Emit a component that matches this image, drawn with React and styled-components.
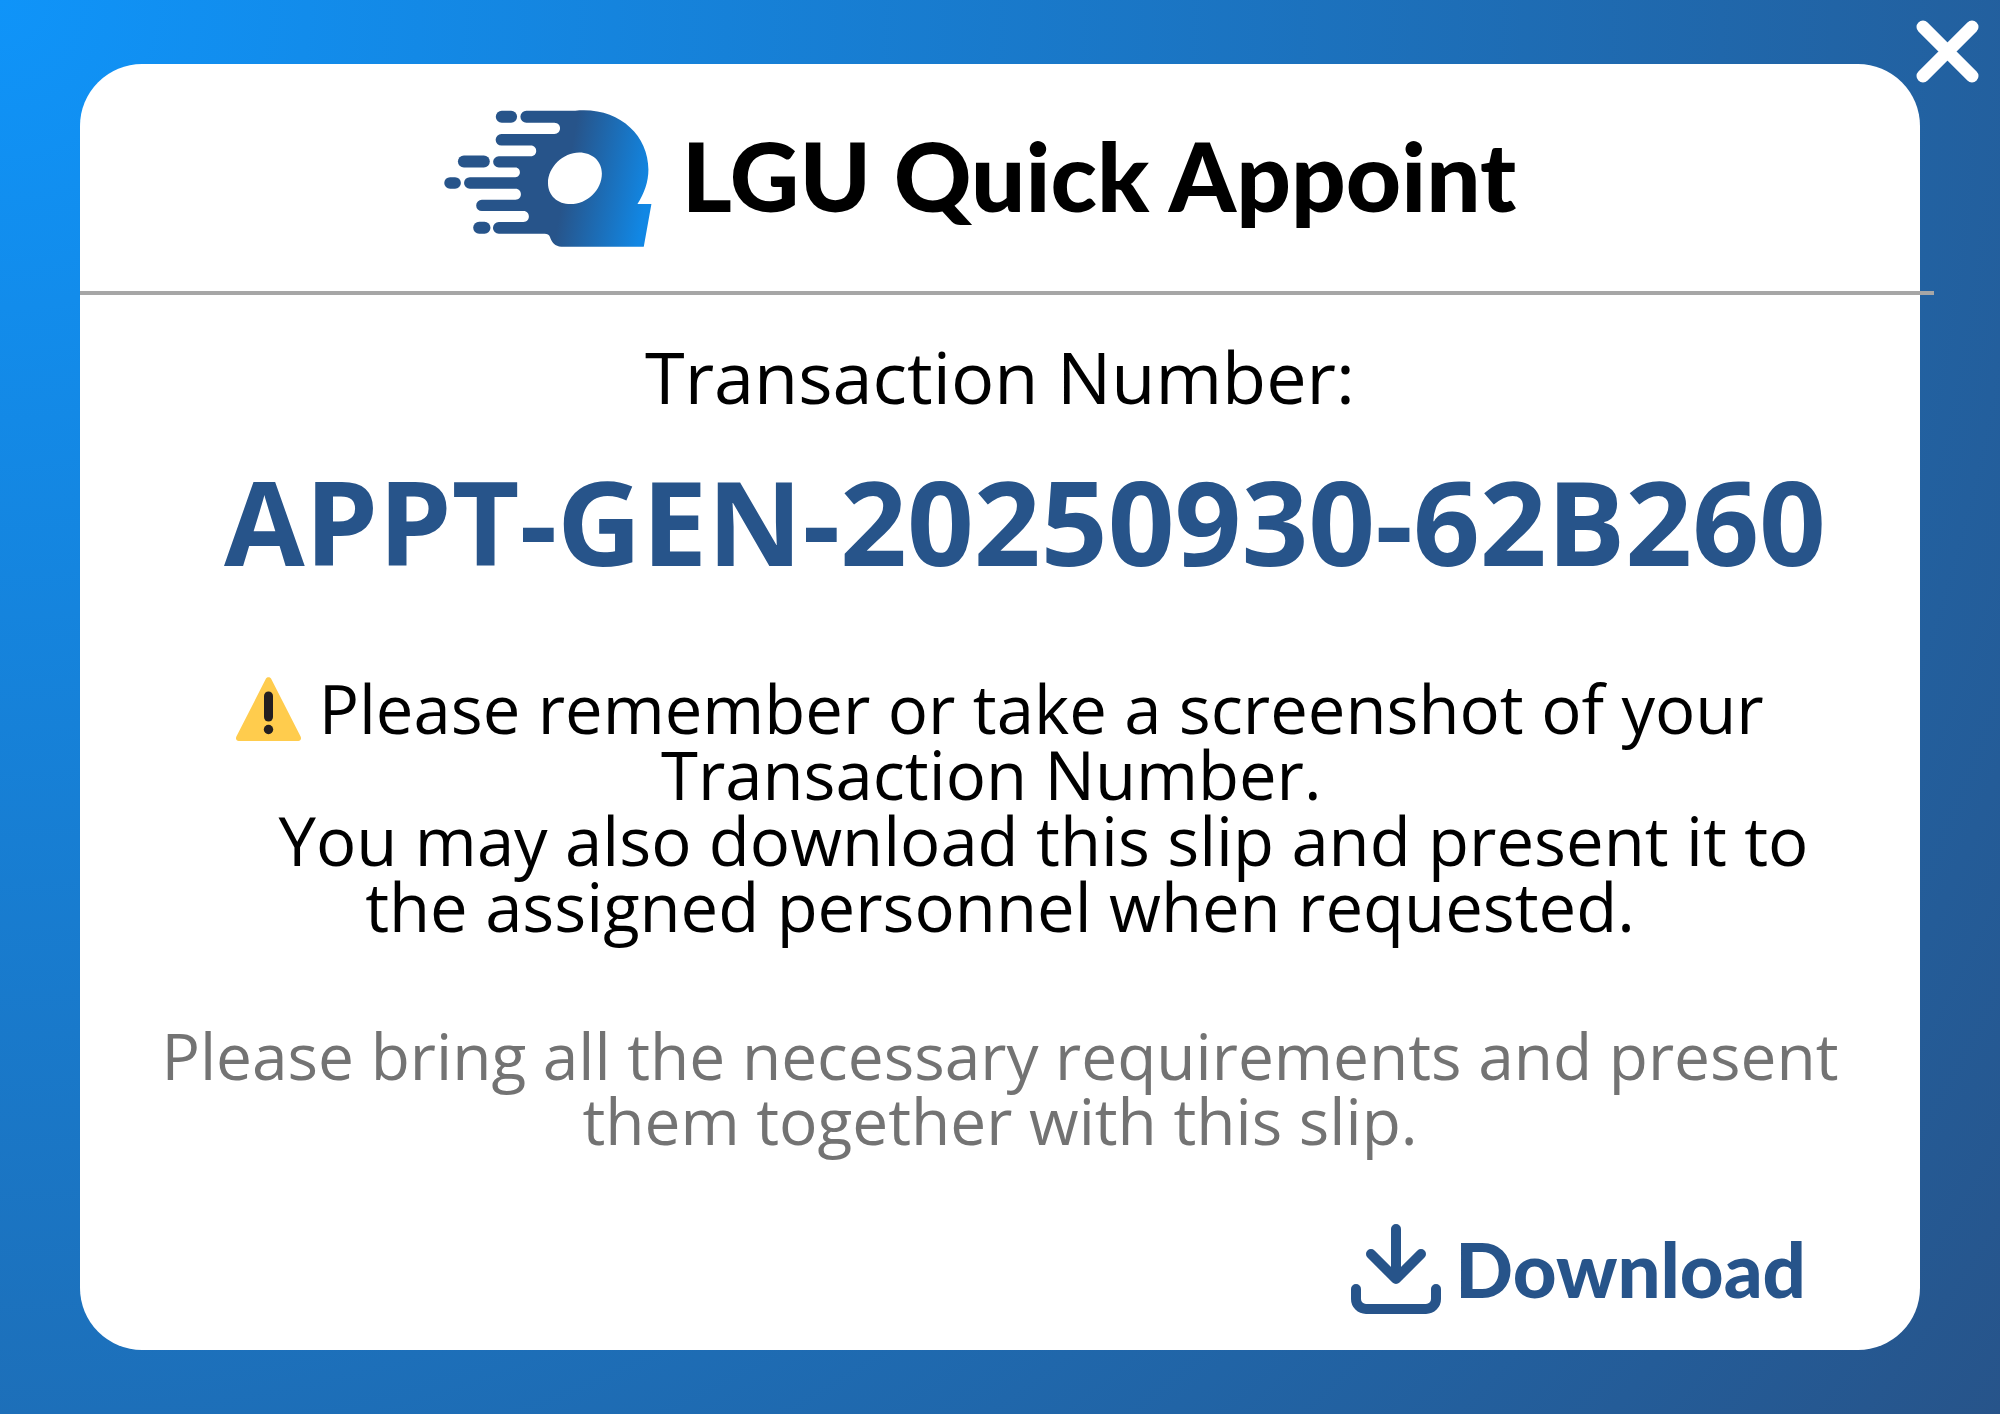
import React from "react";
import styled, { createGlobalStyle } from "styled-components";

const navy = "#27548a";

const GlobalStyle = createGlobalStyle`
  *, *::before, *::after { box-sizing: border-box; }
  body { margin: 0; font-family: "Open Sans", "Noto Sans", sans-serif; color: #000; }
`;

const Page = styled.main`
  position: relative;
  display: flex;
  min-height: 100vh;
  padding: 64px 80px;
  background: radial-gradient(circle farthest-corner at 0 0, #0f94f9, ${navy});
`;

const CloseButton = styled.button`
  position: absolute;
  top: 20px;
  right: 21px;
  padding: 0;
  border: 0;
  background: none;
  cursor: pointer;
  svg { display: block; }
`;

const Card = styled.section`
  flex: 1;
  display: flex;
  flex-direction: column;
  border-radius: 62px;
  background: #fff;
`;

const Header = styled.header`
  display: flex;
  align-items: center;
  justify-content: center;
  gap: 30px;
  height: 227px;
  padding: 2px 40px 0 0;
`;

const Title = styled.h1`
  margin: 0;
  padding-bottom: 8px;
  font: 900 96px/112px Lato, "Open Sans", sans-serif;
`;

const Divider = styled.hr`
  width: calc(100% + 14px);
  height: 4px;
  margin: 0;
  border: 0;
  background: #a6a6a6;
`;

const Body = styled.div`
  flex: 1;
  display: flex;
  flex-direction: column;
  padding: 33px 0 36px;
  text-align: center;
`;

const Label = styled.h2`
  margin: 0 0 27px;
  font-size: 72px;
  font-weight: 400;
  line-height: 96px;
`;

const Reference = styled.p`
  margin: 0 0 84px;
  padding-left: 50px;
  color: ${navy};
  font-size: 117px;
  font-weight: 700;
  line-height: 140px;
`;

const Message = styled.p`
  margin: 0 0 84px;
  font-size: 67px;
  line-height: 66px;
  svg { vertical-align: -7px; }
`;

const Reminder = styled.p`
  margin: 0;
  color: #737373;
  font-size: 64px;
  line-height: 65px;
`;

const DownloadButton = styled.button`
  display: flex;
  align-items: center;
  align-self: flex-end;
  gap: 14px;
  height: 90px;
  margin: auto 114px 0 0;
  padding: 0;
  border: 0;
  background: none;
  color: ${navy};
  font: 900 76px/90px Lato, "Open Sans", sans-serif;
  cursor: pointer;
`;

function Logo() {
  return (
    <svg width="208" height="137" viewBox="36 29 624 412" aria-hidden="true">
      <defs>
        <linearGradient id="logoFill" gradientUnits="userSpaceOnUse" x1="405" y1="220" x2="650" y2="265">
          <stop offset="0" stopColor={navy} />
          <stop offset="1" stopColor="#1187e4" />
        </linearGradient>
      </defs>
      <g fill={navy}>
        <rect x="191" y="31" width="64" height="36" rx="18" />
        <rect x="77" y="166" width="96" height="36" rx="18" />
        <rect x="36" y="231" width="50" height="35" rx="17.500" />
        <rect x="123" y="365" width="52" height="36" rx="18" />
      </g>
      <path
        fill="url(#logoFill)"
        fillRule="evenodd"
        d="M283 31H430C555 18 650 100 650 208C650 244 638 280 617 312H659L636 440H388C370 440 358 426 354 411Q350 401 338 401H200A17.500 17.500 0 0 1 200 366H274C296 366 296 333 274 333H149A17 17 0 0 1 149 299H250C272 299 272 266 250 266H113A17.500 17.500 0 0 1 113 231H250C268 231 268 202 250 202H200A17 17 0 0 1 200 168H296C318 168 318 136 296 136H208A17.500 17.500 0 0 1 208 101H367C390 101 390 67 367 67H283A18 18 0 0 1 283 31ZM442 157C393 157 348 201 348 249C348 286 377 312 416 312C466 312 510 270 510 220C510 183 481 157 442 157Z"
      />
    </svg>
  );
}

function CloseIcon() {
  return (
    <svg width="63" height="63" viewBox="0 0 63 63" stroke="#fff" strokeWidth="13" strokeLinecap="round" aria-hidden="true">
      <path d="M7 7L56 56M56 7L7 56" />
    </svg>
  );
}

function WarningIcon() {
  return (
    <svg width="65" height="64" viewBox="0 0 65 64" role="img" aria-label="Warning">
      <path fill="#ffcc4d" d="M2.700 64C.5 64-.7 61.600.4 59.600L30 1.600C31.100-.3 33.900-.3 35 1.600L64.600 59.600C65.700 61.600 64.500 64 62.300 64Z" />
      <rect x="28" y="14.500" width="9" height="30" rx="4.500" fill="#231f20" />
      <circle cx="32.500" cy="52.500" r="4.700" fill="#231f20" />
    </svg>
  );
}

function DownloadIcon() {
  return (
    <svg width="90" height="90" viewBox="0 0 90 90" fill="none" stroke={navy} strokeWidth="10" strokeLinecap="round" strokeLinejoin="round" aria-hidden="true">
      <path d="M45 5V55M20 30L45 55L70 30M5 65V75A10 10 0 0 0 15 85H75A10 10 0 0 0 85 75V65" />
    </svg>
  );
}

export default function App() {
  return (
    <>
      <GlobalStyle />
      <Page>
        <Card>
          <Header>
            <Logo />
            <Title>LGU Quick Appoint</Title>
          </Header>
          <Divider />
          <Body>
            <Label>Transaction Number:</Label>
            <Reference>APPT-GEN-20250930-62B260</Reference>
            <Message>
              <WarningIcon /> Please remember or take a screenshot of your
              <br />
              Transaction Number.&nbsp;
              <br />
              &nbsp;&nbsp;&nbsp;&nbsp;&nbsp;You may also download this slip and present it to
              <br />
              the assigned personnel when requested.
            </Message>
            <Reminder>
              Please bring all the necessary requirements and present
              <br />
              them together with this slip.
            </Reminder>
            <DownloadButton type="button">
              <DownloadIcon />
              Download
            </DownloadButton>
          </Body>
        </Card>
        <CloseButton type="button" aria-label="Close">
          <CloseIcon />
        </CloseButton>
      </Page>
    </>
  );
}
